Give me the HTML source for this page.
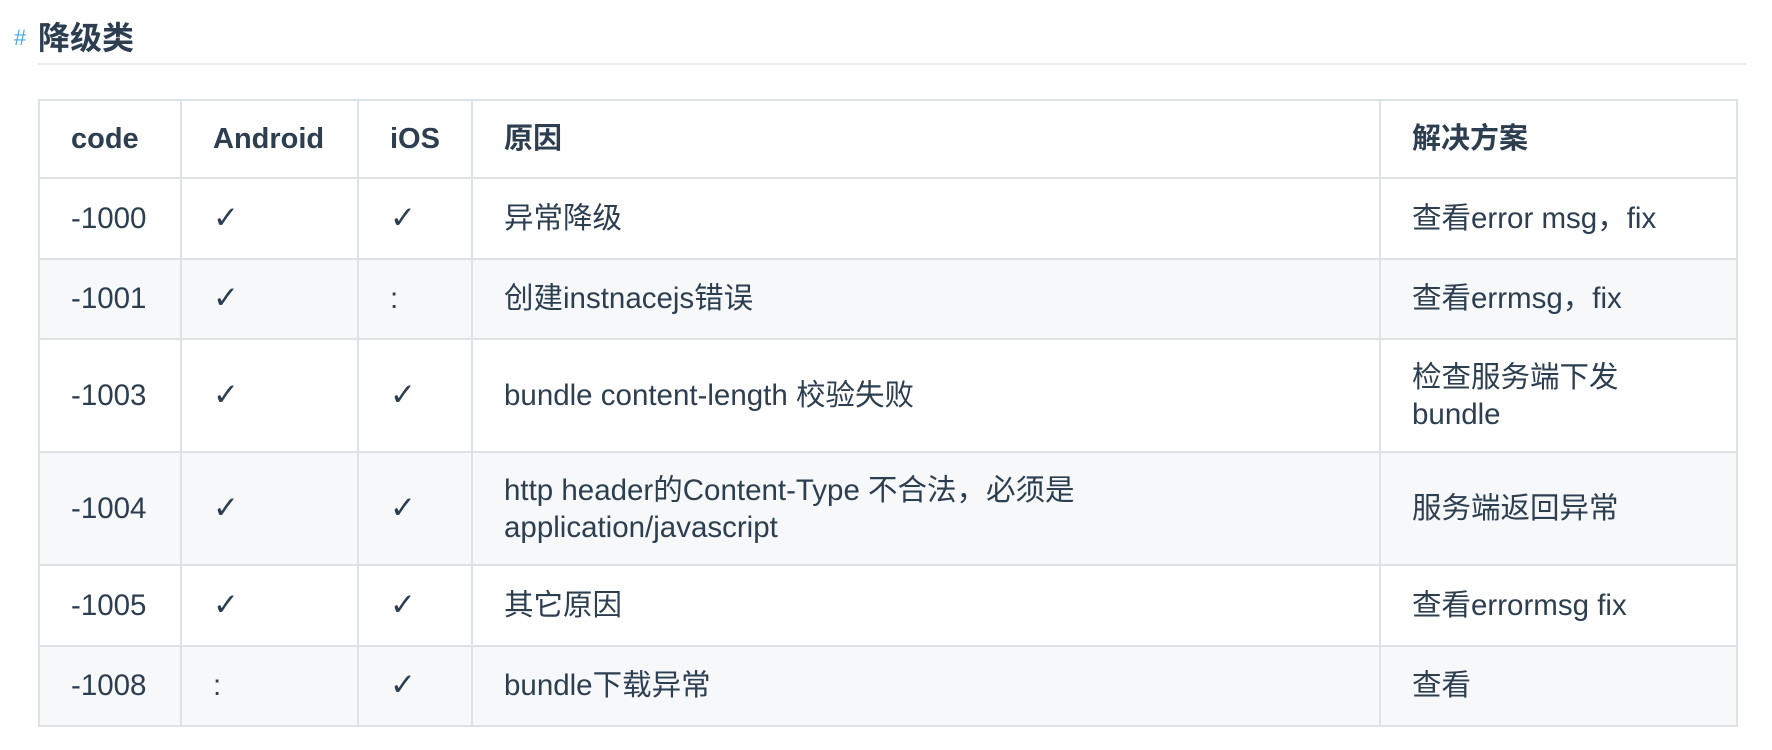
<!DOCTYPE html>
<html><head><meta charset="utf-8"><style>
html,body{margin:0;padding:0;background:#fff;width:1772px;height:750px;overflow:hidden}
body{font-family:"Liberation Sans","Noto Sans CJK SC",sans-serif;color:#2c3e50}
.h{position:absolute;left:0;top:18px;height:40px;font-size:32px;font-weight:bold;line-height:40px}
.h .hash{position:absolute;left:14px;top:0;color:#4aa8e8;font-size:22px;font-weight:normal}
.h .t{position:absolute;left:38px;top:0;white-space:nowrap}
.hr{position:absolute;left:38px;top:63px;width:1708px;height:2px;background:#eaecef}
table{position:absolute;left:38px;top:99px;border-collapse:collapse;table-layout:fixed;width:1698px;font-size:29.5px}
td,th{border:2px solid #dfe2e5;padding:0 0 0 31px;text-align:left;vertical-align:middle;line-height:37px;white-space:nowrap}
th{font-weight:bold;height:76px;font-size:29px}
td{height:78.5px}
tr.s td{background:#f6f8fa}
tr.tall td{height:111px}
.ck{font-family:"DejaVu Sans",sans-serif;font-size:31px}
</style></head><body>
<div class="h"><span class="hash">#</span><span class="t">降级类</span></div>
<div class="hr"></div>
<table>
<colgroup><col style="width:142px"><col style="width:177px"><col style="width:114px"><col style="width:908px"><col style="width:357px"></colgroup>
<tr><th>code</th><th>Android</th><th>iOS</th><th>原因</th><th>解决方案</th></tr>
<tr><td>-1000</td><td class="ck">✓</td><td class="ck">✓</td><td>异常降级</td><td>查看error msg，fix</td></tr>
<tr class="s"><td>-1001</td><td class="ck">✓</td><td>:</td><td>创建instnacejs错误</td><td>查看errmsg，fix</td></tr>
<tr class="tall"><td>-1003</td><td class="ck">✓</td><td class="ck">✓</td><td>bundle content-length 校验失败</td><td>检查服务端下发<br>bundle</td></tr>
<tr class="s tall"><td>-1004</td><td class="ck">✓</td><td class="ck">✓</td><td>http header的Content-Type 不合法，必须是<br>application/javascript</td><td>服务端返回异常</td></tr>
<tr><td>-1005</td><td class="ck">✓</td><td class="ck">✓</td><td>其它原因</td><td>查看errormsg fix</td></tr>
<tr class="s"><td>-1008</td><td>:</td><td class="ck">✓</td><td>bundle下载异常</td><td>查看</td></tr>
</table>
</body></html>
